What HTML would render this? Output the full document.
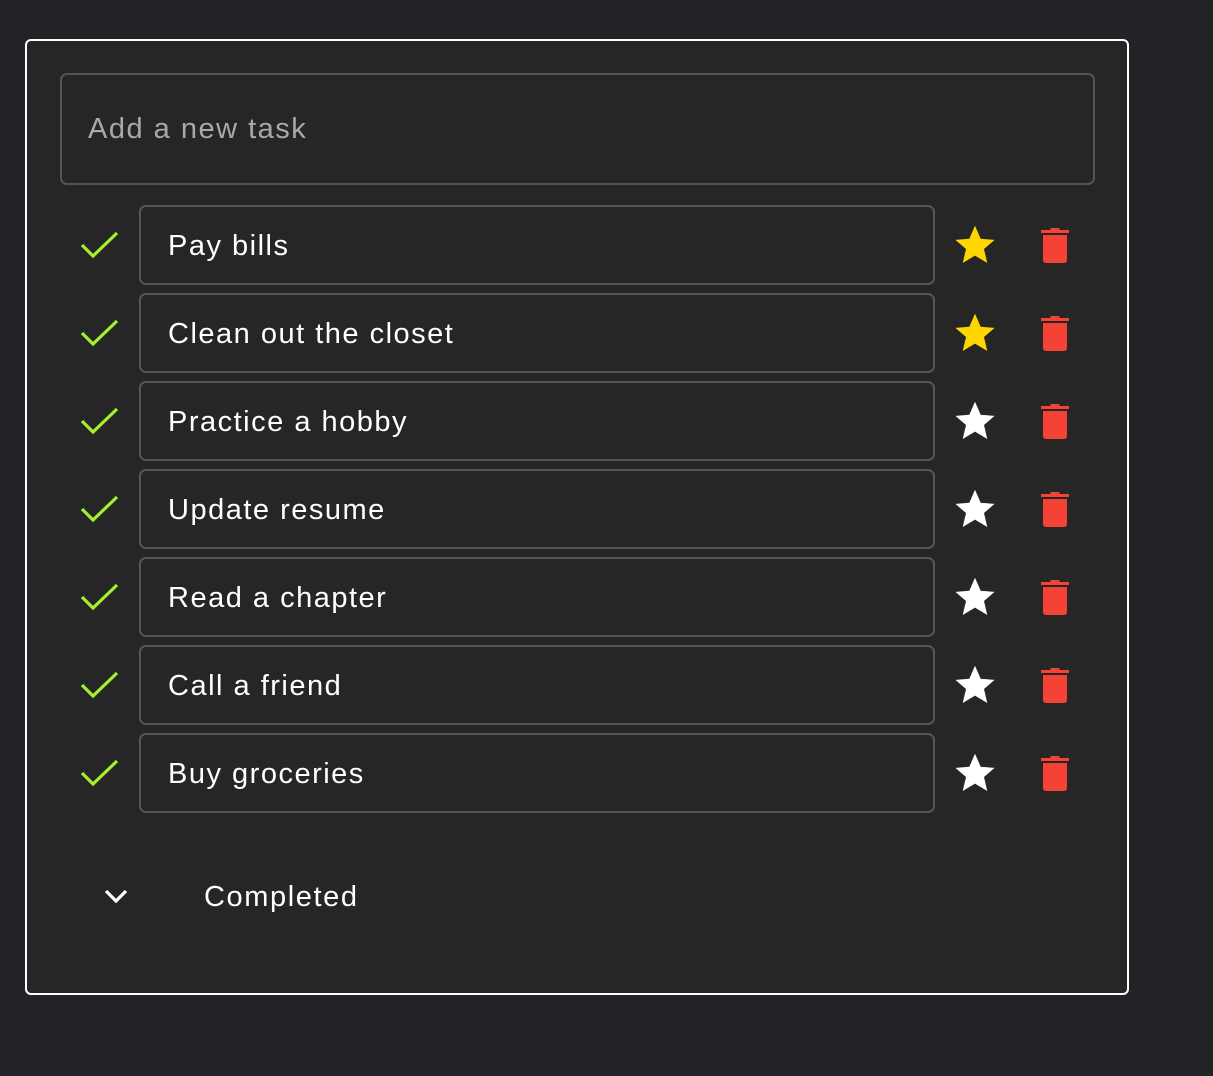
<!DOCTYPE html>
<html><head><style>
*{box-sizing:border-box;margin:0;padding:0}
body{width:1213px;height:1076px;background:#222327;font-family:"Liberation Sans",Roboto,sans-serif;position:relative;overflow:hidden}
.card{position:absolute;left:25px;top:39px;width:1104px;height:956px;background:#262626;border:2px solid #fff;border-radius:6px}
.inp{position:absolute;left:60px;top:73px;width:1035px;height:112px;border:2px solid #555;border-radius:7px;color:#a9a9a9;font-size:29px;letter-spacing:1.5px;padding-left:26px;line-height:108px}
.row{position:absolute;left:0;width:1213px;height:80px}
.box{position:absolute;left:139px;top:0;width:796px;height:80px;border:2px solid #555;border-radius:7px;color:#fff;font-size:29px;letter-spacing:1.5px;padding-left:27px;line-height:78px}
.chk{position:absolute;left:80px;top:22px}
.star{position:absolute;left:953px;top:18px}
.trash{position:absolute;left:1040px;top:21px}
.comp{position:absolute;left:204px;top:881px;color:#fff;font-size:29px;letter-spacing:1.6px}
.chev{position:absolute;left:103px;top:887px}
</style></head><body>
<div class="card"></div>
<div class="inp">Add a new task</div>
<div class="row" style="top:205px"><svg class="chk" width="40" height="36" viewBox="0 0 40 36"><path d="M2 18 L13 29 L37 6" fill="none" stroke="#a2f02e" stroke-width="3.2"/></svg><div class="box">Pay bills</div><svg class="star" width="44" height="44" viewBox="0 0 24 24"><path d="M12 1.5l3.1 7.1 7.6.6-5.8 5 1.8 7.6L12 17.8l-6.7 4 1.8-7.6-5.8-5 7.6-.6z" fill="#ffd600"/></svg><svg class="trash" width="30" height="38" viewBox="0 0 30 38"><path d="M11 2h8l1 2h9v3H1V4h9z" fill="#f44336"/><path d="M3 9h24v25a3 3 0 0 1-3 3H6a3 3 0 0 1-3-3z" fill="#f44336"/></svg></div>
<div class="row" style="top:293px"><svg class="chk" width="40" height="36" viewBox="0 0 40 36"><path d="M2 18 L13 29 L37 6" fill="none" stroke="#a2f02e" stroke-width="3.2"/></svg><div class="box">Clean out the closet</div><svg class="star" width="44" height="44" viewBox="0 0 24 24"><path d="M12 1.5l3.1 7.1 7.6.6-5.8 5 1.8 7.6L12 17.8l-6.7 4 1.8-7.6-5.8-5 7.6-.6z" fill="#ffd600"/></svg><svg class="trash" width="30" height="38" viewBox="0 0 30 38"><path d="M11 2h8l1 2h9v3H1V4h9z" fill="#f44336"/><path d="M3 9h24v25a3 3 0 0 1-3 3H6a3 3 0 0 1-3-3z" fill="#f44336"/></svg></div>
<div class="row" style="top:381px"><svg class="chk" width="40" height="36" viewBox="0 0 40 36"><path d="M2 18 L13 29 L37 6" fill="none" stroke="#a2f02e" stroke-width="3.2"/></svg><div class="box">Practice a hobby</div><svg class="star" width="44" height="44" viewBox="0 0 24 24"><path d="M12 1.5l3.1 7.1 7.6.6-5.8 5 1.8 7.6L12 17.8l-6.7 4 1.8-7.6-5.8-5 7.6-.6z" fill="#fff"/></svg><svg class="trash" width="30" height="38" viewBox="0 0 30 38"><path d="M11 2h8l1 2h9v3H1V4h9z" fill="#f44336"/><path d="M3 9h24v25a3 3 0 0 1-3 3H6a3 3 0 0 1-3-3z" fill="#f44336"/></svg></div>
<div class="row" style="top:469px"><svg class="chk" width="40" height="36" viewBox="0 0 40 36"><path d="M2 18 L13 29 L37 6" fill="none" stroke="#a2f02e" stroke-width="3.2"/></svg><div class="box">Update resume</div><svg class="star" width="44" height="44" viewBox="0 0 24 24"><path d="M12 1.5l3.1 7.1 7.6.6-5.8 5 1.8 7.6L12 17.8l-6.7 4 1.8-7.6-5.8-5 7.6-.6z" fill="#fff"/></svg><svg class="trash" width="30" height="38" viewBox="0 0 30 38"><path d="M11 2h8l1 2h9v3H1V4h9z" fill="#f44336"/><path d="M3 9h24v25a3 3 0 0 1-3 3H6a3 3 0 0 1-3-3z" fill="#f44336"/></svg></div>
<div class="row" style="top:557px"><svg class="chk" width="40" height="36" viewBox="0 0 40 36"><path d="M2 18 L13 29 L37 6" fill="none" stroke="#a2f02e" stroke-width="3.2"/></svg><div class="box">Read a chapter</div><svg class="star" width="44" height="44" viewBox="0 0 24 24"><path d="M12 1.5l3.1 7.1 7.6.6-5.8 5 1.8 7.6L12 17.8l-6.7 4 1.8-7.6-5.8-5 7.6-.6z" fill="#fff"/></svg><svg class="trash" width="30" height="38" viewBox="0 0 30 38"><path d="M11 2h8l1 2h9v3H1V4h9z" fill="#f44336"/><path d="M3 9h24v25a3 3 0 0 1-3 3H6a3 3 0 0 1-3-3z" fill="#f44336"/></svg></div>
<div class="row" style="top:645px"><svg class="chk" width="40" height="36" viewBox="0 0 40 36"><path d="M2 18 L13 29 L37 6" fill="none" stroke="#a2f02e" stroke-width="3.2"/></svg><div class="box">Call a friend</div><svg class="star" width="44" height="44" viewBox="0 0 24 24"><path d="M12 1.5l3.1 7.1 7.6.6-5.8 5 1.8 7.6L12 17.8l-6.7 4 1.8-7.6-5.8-5 7.6-.6z" fill="#fff"/></svg><svg class="trash" width="30" height="38" viewBox="0 0 30 38"><path d="M11 2h8l1 2h9v3H1V4h9z" fill="#f44336"/><path d="M3 9h24v25a3 3 0 0 1-3 3H6a3 3 0 0 1-3-3z" fill="#f44336"/></svg></div>
<div class="row" style="top:733px"><svg class="chk" width="40" height="36" viewBox="0 0 40 36"><path d="M2 18 L13 29 L37 6" fill="none" stroke="#a2f02e" stroke-width="3.2"/></svg><div class="box">Buy groceries</div><svg class="star" width="44" height="44" viewBox="0 0 24 24"><path d="M12 1.5l3.1 7.1 7.6.6-5.8 5 1.8 7.6L12 17.8l-6.7 4 1.8-7.6-5.8-5 7.6-.6z" fill="#fff"/></svg><svg class="trash" width="30" height="38" viewBox="0 0 30 38"><path d="M11 2h8l1 2h9v3H1V4h9z" fill="#f44336"/><path d="M3 9h24v25a3 3 0 0 1-3 3H6a3 3 0 0 1-3-3z" fill="#f44336"/></svg></div>
<svg class="chev" width="26" height="20" viewBox="0 0 26 20"><path d="M3 4 L13 14 L23 4" fill="none" stroke="#fff" stroke-width="3.2"/></svg>
<div class="comp">Completed</div>
</body></html>
